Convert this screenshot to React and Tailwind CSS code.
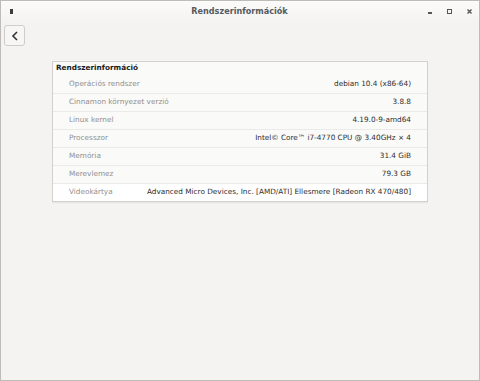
import React from "react";

const rows = [
  ["Operációs rendszer", "debian 10.4 (x86-64)"],
  ["Cinnamon környezet verzió", "3.8.8"],
  ["Linux kernel", "4.19.0-9-amd64"],
  ["Processzor", "Intel© Core™ i7-4770 CPU @ 3.40GHz × 4"],
  ["Memória", "31.4 GiB"],
  ["Merevlemez", "79.3 GB"],
  ["Videokártya", "Advanced Micro Devices, Inc. [AMD/ATI] Ellesmere [Radeon RX 470/480]"],
];

export default function App() {
  return (
    <div
      className="w-[480px] h-[381px] bg-[#f4f3f1] border border-[#bdbcb9] flex flex-col overflow-hidden"
      style={{ fontFamily: '"DejaVu Sans", sans-serif' }}
    >
      {/* title bar */}
      <div className="h-[21px] shrink-0 flex items-center pl-[8px] pr-[7px] bg-gradient-to-b from-[#fbfbfa] to-[#f4f3f1]">
        <div className="w-[3px] h-[5px] bg-[#3c3c3c] ml-[1px]" />
        <div className="flex-1 text-center text-[8.1px] font-bold text-[#555a60] pl-[38px]">
          Rendszerinformációk
        </div>
        <div className="flex items-center gap-[15px]">
          <div className="w-[4px] h-[1.5px] bg-[#555] mt-[3px]" />
          <div className="w-[5px] h-[5px] border-[1.5px] border-[#555]" />
          <svg width="5" height="5" viewBox="0 0 5 5">
            <path d="M0.5 0.5L4.5 4.5M4.5 0.5L0.5 4.5" stroke="#555" strokeWidth="1.4" />
          </svg>
        </div>
      </div>

      <div className="px-[3px] pt-[3px]">
        <button className="w-[21px] h-[21px] flex items-center justify-center rounded-[3px] border border-[#cfcdca] bg-[#f7f6f5]">
          <svg width="8" height="10" viewBox="0 0 8 10">
            <path d="M6 1L2 5L6 9" stroke="#2e3436" strokeWidth="1.6" fill="none" />
          </svg>
        </button>
      </div>

      <div className="pl-[51px] pr-[51px] pt-[15px]">
        <div className="border border-[#d4d2cf] bg-[#fafaf9] shadow-[0_1px_1px_rgba(0,0,0,0.06)]">
          <div className="h-[13px] flex items-center px-[3px] text-[7.3px] font-bold text-[#1a1a1a]">
            Rendszerinformáció
          </div>
          {rows.map(([k, v], i) => (
            <div
              key={k}
              className={`h-[18px] flex items-center justify-between pl-[16px] pr-[16px] text-[7.3px] ${
                i > 0 ? "border-t border-[#ebeae8]" : ""
              } ${i === rows.length - 1 ? "bg-white" : ""}`}
            >
              <span className="text-[#8f8f8f] whitespace-nowrap">{k}</span>
              <span className="text-[#2e2e2e] whitespace-nowrap">{v}</span>
            </div>
          ))}
        </div>
      </div>
    </div>
  );
}
